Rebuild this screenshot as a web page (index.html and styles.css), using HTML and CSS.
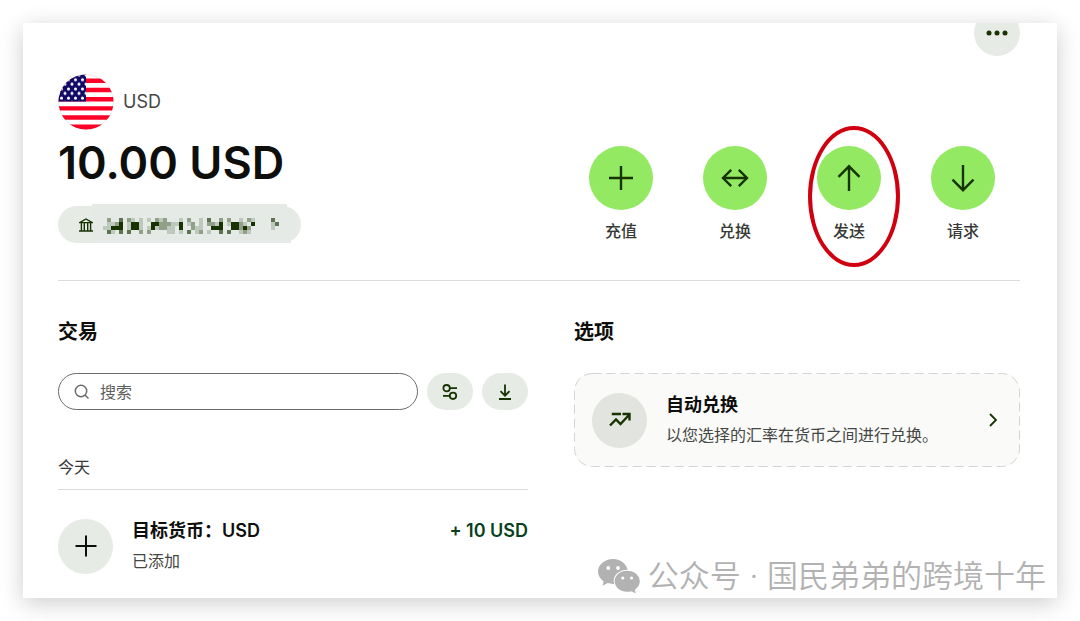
FILE: index.html
```html
<!DOCTYPE html>
<html lang="zh-CN">
<head>
  <meta charset="utf-8">
  <title>USD</title>
  <link rel="stylesheet" href="styles.css">
</head>
<body>
  <main class="card">
    <div class="topbar">
      <button class="more" type="button" aria-label="更多">
        <svg width="22" height="6" viewBox="0 0 22 6"><circle cx="3" cy="3" r="2.5"/><circle cx="11" cy="3" r="2.5"/><circle cx="19" cy="3" r="2.5"/></svg>
      </button>
    </div>

    <header class="balance">
      <div class="account">
        <div class="currency">
          <svg class="flag" width="56" height="56" viewBox="0 0 56 56">
            <defs>
              <clipPath id="round"><circle cx="28" cy="28" r="27.5"/></clipPath>
              <pattern id="stars" width="7" height="9.2" patternUnits="userSpaceOnUse" x="0" y="1">
                <circle cx="3.5" cy="4.8" r="1.5"/><circle cx="0" cy="9.2" r="1.5"/><circle cx="7" cy="9.2" r="1.5"/><circle cx="0" cy="0" r="1.5"/><circle cx="7" cy="0" r="1.5"/>
              </pattern>
            </defs>
            <g clip-path="url(#round)">
              <path fill="#fff" d="M0 0h56v56H0z"/>
              <path fill="#ff0026" d="M0 4.500h56v4.600H0zM0 13.700h56v4.600H0zM0 23h56v4.500H0zM0 32.200h56v4.400H0zM0 41.300h56v4.500H0zM0 50.400h56V56H0z"/>
              <path fill="#130a66" d="M0 0h28v27.500H0z"/>
              <path class="stars" d="M0 0h28v27H0z"/>
            </g>
            <circle cx="28" cy="28" r="27.300" fill="none" stroke="#000" stroke-opacity=".15" stroke-width=".6"/>
          </svg>
          <span>USD</span>
        </div>
        <h1>10.00 USD</h1>
        <button class="details" type="button" aria-label="账户信息">
          <svg class="patch" width="209" height="39" viewBox="0 0 209 39"><path d="M0 0h195v4h4v4h5v22h-1v5h-4v4H0z"/></svg>
          <svg class="bank" width="14" height="14" viewBox="0 0 14 14"><path d="M.7 4.600L7 1l6.300 3.600zM2.400 5v7.500M5.300 5v7.500M8.700 5v7.500M11.600 5v7.500M0 13h14"/></svg>
          <!-- hidden account number, 4px cells -->
          <svg class="mosaic" width="176" height="16" viewBox="0 0 44 4" shape-rendering="crispEdges">
            <path opacity=".18" d="M0 2h1v1H0zM1 1h1v2H1zM2 1h1v1H2zM2 3h1v1H2zM6 1h1v2H6zM7 0h1v1H7zM9 0h1v3H9zM11 0h1v1h-1zM11 2h1v1h-1zM13 2h1v1h-1zM14 0h1v1h-1zM16 2h2v2h-2zM17 1h2v1h-2zM19 0h1v1h-1zM19 3h1v1h-1zM21 1h1v1h-1zM23 2h1v2h-1zM24 0h1v3h-1zM26 3h1v1h-1zM28 1h1v1h-1zM31 1h1v1h-1zM34 0h1v1h-1zM34 3h1v1h-1zM35 1h1v1h-1zM36 3h1v1h-1zM37 0h1v1h-1zM42 1h1v2h-1z"/>
            <path opacity=".4" d="M1 0h1v1H1zM3 1h1v1H3zM6 0h1v1H6zM9 3h1v1H9zM11 3h1v1h-1zM13 0h1v1h-1zM14 1h1v2h-1zM15 0h1v3h-1zM16 1h1v1h-1zM21 0h1v1h-1zM22 1h1v2h-1zM24 3h1v1h-1zM26 1h1v1h-1zM27 1h1v1h-1zM29 0h1v1h-1zM31 0h1v1h-1zM34 1h1v2h-1zM35 3h1v1h-1zM36 0h1v1h-1zM36 2h1v1h-1z"/>
            <path opacity=".65" d="M1 3h1v1H1zM4 0h1v1H4zM4 3h1v1H4zM6 3h1v1H6zM21 3h1v1h-1zM26 0h1v1h-1zM29 3h1v1h-1zM31 3h1v1h-1zM42 0h1v1h-1zM43 1h1v1h-1z"/>
            <path d="M2 2h3v1H2zM4 1h1v1H4zM7 1h2v2H7zM12 1h2v1h-1v1h-1zM19 1h1v2h-1zM27 2h3v1h-3zM29 1h1v1h-1zM32 1h2v2h-2zM35 2h1v1h-1zM37 1h1v1h-1z"/>
          </svg>
        </button>
      </div>

      <nav class="actions">
        <button class="action" type="button">
          <svg viewBox="0 0 64 64"><path d="M32 20v24M20 32h24"/></svg>
          <span>充值</span>
        </button>
        <button class="action" type="button">
          <svg viewBox="0 0 64 64"><path d="M20 32h24M28.200 23.800L20 32l8.200 8.200M35.800 23.800L44 32l-8.200 8.200"/></svg>
          <span>兑换</span>
        </button>
        <button class="action marked" type="button">
          <svg viewBox="0 0 64 64"><path d="M32 20v25M21.500 30.800L32 20.300l10.500 10.500"/></svg>
          <span>发送</span>
        </button>
        <button class="action" type="button">
          <svg viewBox="0 0 64 64"><path d="M32 19v25M21.500 33.700L32 44.200l10.500-10.500"/></svg>
          <span>请求</span>
        </button>
      </nav>
    </header>

    <div class="columns">
      <section>
        <h2>交易</h2>
        <div class="tools">
          <label class="search">
            <svg width="16" height="16" viewBox="0 0 16 16"><circle cx="7" cy="7" r="5.700"/><path d="M11 11l3.500 3.500"/></svg>
            <input type="text" placeholder="搜索" aria-label="搜索">
          </label>
          <button class="tool" type="button" aria-label="筛选">
            <svg width="16" height="16" viewBox="0 0 16 16"><circle cx="4.600" cy="4.200" r="3.200"/><circle cx="11" cy="11.800" r="3.200"/><path d="M7.800 4.200H15M1 11.800h6.800"/></svg>
          </button>
          <button class="tool" type="button" aria-label="下载">
            <svg width="16" height="16" viewBox="0 0 16 16"><path d="M8 .5v11M3.500 7.200L8 11.700l4.500-4.500M2 15h12"/></svg>
          </button>
        </div>
        <h3>今天</h3>
        <div class="entry">
          <div class="circle">
            <svg width="22" height="22" viewBox="0 0 22 22"><path d="M11 .5v21M.5 11h21"/></svg>
          </div>
          <div class="text">
            <strong>目标货币：USD</strong>
            <span>已添加</span>
          </div>
          <strong class="amount">+ 10 USD</strong>
        </div>
      </section>

      <section>
        <h2>选项</h2>
        <a class="option" href="#">
          <svg class="dash" width="100%" height="100%"><rect x="0.5" y="0.5" rx="18"/></svg>
          <div class="circle grey">
            <svg width="22" height="16" viewBox="0 0 22 16"><path d="M1 13.500l6-6 4.500 4.500L20 3M2.800 2H12M13.500 2h7v6.500"/></svg>
          </div>
          <div class="text">
            <strong>自动兑换</strong>
            <span>以您选择的汇率在货币之间进行兑换。</span>
          </div>
          <svg class="chevron" width="8" height="14" viewBox="0 0 8 14"><path d="M1 1l6 6-6 6"/></svg>
        </a>
      </section>
    </div>

    <div class="watermark">
      <svg width="42" height="35" viewBox="0 0 42 35">
        <path d="M15 0C6.700 0 0 5.600 0 12.600c0 4 2.200 7.500 5.600 9.800L4.500 26.800l5.200-2.700c1.700.5 3.500.8 5.300.8h1.200c-.3-1-.5-2-.5-3 0-6.200 6-11.100 13.400-11.100h.6C28.300 4.600 22.300 0 15 0z"/>
        <path d="M29.200 11.800c-7 0-12.600 4.700-12.600 10.500s5.600 10.500 12.600 10.500c1.500 0 3-.2 4.300-.6l4.300 2.300-1-3.800c3-1.900 5-5 5-8.400 0-5.800-5.600-10.500-12.600-10.500z"/>
        <g fill="#fff"><circle cx="10.300" cy="9" r="1.900"/><circle cx="20" cy="9" r="1.900"/><circle cx="24.800" cy="19" r="1.600"/><circle cx="33.500" cy="19" r="1.600"/></g>
      </svg>
      <span>公众号 · 国民弟弟的跨境十年</span>
    </div>
  </main>
</body>
</html>
```
FILE: styles.css
```css
*,
*::before,
*::after {
  box-sizing: border-box;
}

body {
  margin: 0;
  padding: 23px;
  background: #fff;
  color: #0e0f0c;
  font-family: Inter, "Noto Sans CJK SC", sans-serif;
  font-size: 16px;
  line-height: 24px;
}

button {
  border: 0;
  padding: 0;
  background: none;
  color: inherit;
  font: inherit;
  cursor: pointer;
}

svg {
  display: block;
  flex: none;
}

h1, h2, h3 {
  margin: 0;
}

.card {
  position: relative;
  min-height: calc(100vh - 46px);
  padding: 0 37px 0 35px;
  overflow: hidden;
  background: #fff;
  box-shadow: 0 5px 22px rgba(0, 0, 0, .2);
}

.topbar {
  display: flex;
  justify-content: flex-end;
  margin-top: -13px;
}

.more {
  display: flex;
  align-items: center;
  justify-content: center;
  width: 46px;
  height: 46px;
  border-radius: 50%;
  background: #e6ebe5;
  fill: #163300;
}

.balance {
  display: flex;
  justify-content: space-between;
  align-items: flex-end;
  padding: 18px 0 37px;
  border-bottom: 1px solid #dcdddb;
}

.currency {
  display: flex;
  align-items: center;
  gap: 9px;
  color: #454745;
  font-size: 18px;
}

.stars {
  fill: url(#stars);
}

#stars circle {
  fill: #fff;
}

h1 {
  margin: 5px 0 15px;
  font-size: 45px;
  font-weight: 600;
  line-height: 56px;
}

.details {
  position: relative;
  display: flex;
  align-items: center;
  gap: 18px;
  width: 243px;
  height: 37px;
  padding-left: 21px;
  border-radius: 19px;
  background: #e6ebe5;
}

.patch {
  position: absolute;
  left: 34px;
  top: -2px;
  fill: #e5eae6;
}

.bank,
.mosaic {
  position: relative;
}

.bank {
  fill: none;
  stroke: #163300;
  stroke-width: 1.4;
}

.mosaic {
  margin: 2px 0 0 -8px;
  fill: #163300;
}

.actions {
  display: flex;
  gap: 50px;
  margin-right: 25px;
}

.action {
  position: relative;
  width: 64px;
  color: #373a36;
  font-weight: 500;
}

.action svg {
  width: 64px;
  height: 64px;
  margin-bottom: 9px;
  border-radius: 50%;
  background: #93e962;
  fill: none;
  stroke: #163300;
  stroke-width: 2.4;
}

.marked::after {
  content: "";
  position: absolute;
  left: -9px;
  top: -20px;
  width: 92px;
  height: 141px;
  border: 4px solid #d0000f;
  border-radius: 50%;
}

.columns {
  display: grid;
  grid-template-columns: 470fr 446fr;
  gap: 46px;
  padding-top: 36px;
}

h2 {
  margin-bottom: 26px;
  font-size: 20px;
  font-weight: 700;
  line-height: 30px;
}

.tools {
  display: flex;
  gap: 9px;
}

.search {
  display: flex;
  flex: 1;
  align-items: center;
  gap: 10px;
  height: 37px;
  padding: 0 15px;
  border: 1px solid #6a6c6a;
  border-radius: 19px;
}

.search svg {
  fill: none;
  stroke: #6a6c6a;
  stroke-width: 1.5;
}

.search input {
  flex: 1;
  min-width: 0;
  padding: 0;
  border: 0;
  outline: 0;
  background: none;
  font: inherit;
}

.search input::placeholder {
  color: #5d5f5d;
}

.tool {
  display: flex;
  align-items: center;
  justify-content: center;
  width: 46px;
  height: 37px;
  border-radius: 19px;
  background: #e6ebe5;
}

.tool svg {
  fill: none;
  stroke: #163300;
  stroke-width: 1.8;
}

h3 {
  margin-top: 45px;
  padding-bottom: 10px;
  border-bottom: 1px solid #dcdddb;
  color: #373a36;
  font-size: 16px;
  font-weight: 400;
}

.entry {
  display: flex;
  align-items: center;
  gap: 19px;
  padding: 27px 0 20px;
}

.circle {
  display: flex;
  flex: none;
  align-items: center;
  justify-content: center;
  width: 55px;
  height: 55px;
  border-radius: 50%;
  background: #e6ebe5;
}

.circle svg {
  fill: none;
  stroke: #0e0f0c;
  stroke-width: 2;
}

.grey {
  background: #e2e4e0;
}

.grey svg {
  stroke: #163300;
  stroke-width: 2.4;
}

.text {
  display: flex;
  flex: 1;
  flex-direction: column;
  gap: 2px;
}

.text strong,
.amount {
  font-size: 18px;
  font-weight: 600;
  line-height: 28px;
}

.text span {
  color: #454745;
  line-height: 28px;
}

.amount {
  align-self: flex-start;
  color: #0b3f20;
}

.option {
  position: relative;
  display: flex;
  align-items: center;
  gap: 19px;
  height: 94px;
  padding: 0 23px 0 18px;
  border-radius: 18px;
  background: #fafaf8;
  color: inherit;
  text-decoration: none;
}

.dash {
  position: absolute;
  left: 0;
  top: 0;
}

.dash rect {
  width: calc(100% - 1px);
  height: calc(100% - 1px);
  fill: none;
  stroke: #d3d5d2;
  stroke-dasharray: 9 5;
}

.chevron {
  fill: none;
  stroke: #163300;
  stroke-width: 1.8;
}

.watermark {
  position: absolute;
  right: 11px;
  bottom: 0;
  display: flex;
  align-items: center;
  gap: 8px;
  color: #b2b2b2;
  fill: #b2b2b2;
  font-size: 31px;
  font-weight: 350;
  line-height: 44px;
}
```
